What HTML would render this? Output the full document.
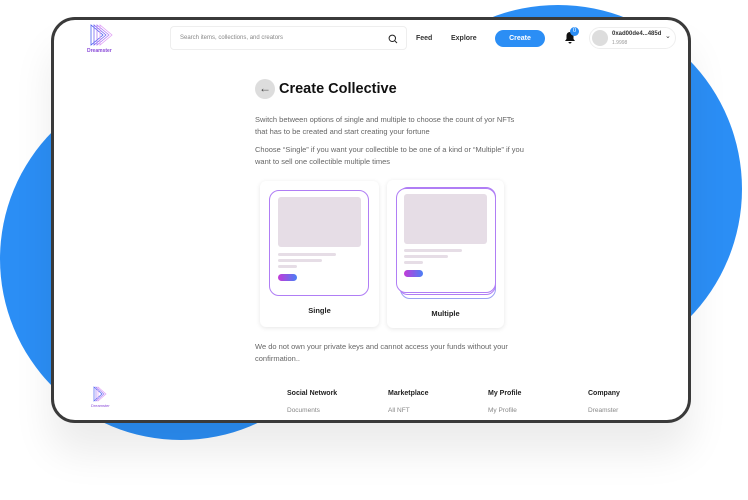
<!DOCTYPE html>
<html><head><style>
*{margin:0;padding:0;box-sizing:border-box}
body{width:748px;height:500px;background:#fff;position:relative;overflow:hidden;font-family:"Liberation Sans",sans-serif}
.c{position:absolute;border-radius:50%;background:#2b8ef5}
.frame{position:absolute;left:51px;top:17px;width:640px;height:406px;border:3px solid #3a3a3a;border-radius:24px;background:#fff;overflow:hidden;box-shadow:0 30px 40px rgba(0,0,0,.08)}
.a{position:absolute}
.search{left:116px;top:6px;width:237px;height:24px;border:1px solid #eee;border-radius:4px;font-size:6px;color:#888;padding:8px 9px}
.nav{font-size:7px;font-weight:bold;color:#333}
.btn{left:441px;top:10px;width:50px;height:17px;border-radius:9px;background:#2b8ef5;color:#fff;font-size:7px;font-weight:bold;text-align:center;line-height:17px}
.p{font-size:7.5px;color:#666;line-height:11.5px}
.card{background:#fff;border-radius:6px;box-shadow:0 1px 5px rgba(0,0,0,.1)}
.inner{border-radius:10px;border:1.5px solid #b07ef5;background:#fff}
.ph{background:#e6dde6;border-radius:3px}
.pill{border-radius:4px;height:7px;background:linear-gradient(90deg,#c33ad8,#4a7ff5)}
.ft{font-size:7px;font-weight:bold;color:#222}
.fl{font-size:6.5px;color:#888}
</style></head><body>
<div class="c" style="left:374px;top:5px;width:368px;height:368px"></div>
<div class="c" style="left:0;top:78px;width:362px;height:362px"></div>
<div class="frame">
 <div class="a" style="left:34px;top:3px;width:30px;height:30px">
  <svg width="30" height="30" viewBox="0 0 30 30"><g fill="none" stroke-width="0.8"><path d="M3 2 L3 22 L15 12 Z" stroke="#4a5ff0"/><path d="M6 2 L6 22 L18 12 Z" stroke="#7a66f0"/><path d="M9 2 L9 22 L21 12 Z" stroke="#b07ef5"/><path d="M12 2 L12 22 L24 12 Z" stroke="#e0a0f5"/></g></svg>
 </div>
 <div class="a" style="left:33px;top:28px;font-size:5px;color:#8a4ad8;font-weight:bold">Dreamster</div>
 <div class="a search">Search items, collections, and creators</div>
 <svg class="a" style="left:334px;top:14px" width="10" height="10" viewBox="0 0 10 10"><circle cx="4.3" cy="4.3" r="3.2" fill="none" stroke="#222" stroke-width="1"/><path d="M6.7 6.7L9 9" stroke="#222" stroke-width="1"/></svg>
 <div class="a nav" style="left:362px;top:15px">Feed</div>
 <div class="a nav" style="left:397px;top:15px">Explore</div>
 <div class="a btn">Create</div>
 <svg class="a" style="left:510px;top:11px" width="12" height="13" viewBox="0 0 12 13"><path d="M6 1C3.5 1 2.5 3 2.5 5V8L1 10H11L9.5 8V5C9.5 3 8.5 1 6 1Z M4.5 11A1.5 1.5 0 0 0 7.5 11Z" fill="#111"/></svg>
 <div class="a" style="left:516px;top:7px;width:9px;height:9px;border-radius:50%;background:#2b8ef5;color:#fff;font-size:6px;text-align:center;line-height:9px">0</div>
 <div class="a" style="left:535px;top:7px;width:87px;height:22px;border:1px solid #eee;border-radius:11px"></div>
 <div class="a" style="left:538px;top:10px;width:16px;height:16px;border-radius:50%;background:#ddd"></div>
 <div class="a" style="left:558px;top:11px;font-size:6px;font-weight:bold;color:#333">0xad00de4...485d</div>
 <div class="a" style="left:558px;top:20px;font-size:5px;color:#999">1.9998</div>
 <div class="a" style="left:611px;top:12px;font-size:7px;color:#333">⌄</div>
 <div class="a" style="left:201px;top:59px;width:20px;height:20px;border-radius:50%;background:#ddd;text-align:center;line-height:19px;font-size:12px;color:#444">←</div>
 <div class="a" style="left:225px;top:61px;font-size:14.5px;font-weight:bold;color:#111">Create Collective</div>
 <div class="a p" style="left:201px;top:94px;width:270px">Switch between options of single and multiple to choose the count of yor NFTs that has to be created and start creating your fortune</div>
 <div class="a p" style="left:201px;top:124px;width:270px">Choose “Single” if you want your collectible to be one of a kind or “Multiple” if you want to sell one collectible multiple times</div>
 <div class="a card" style="left:206px;top:161px;width:119px;height:146px">
  <div class="a inner" style="left:9px;top:9px;width:100px;height:106px">
   <div class="a ph" style="left:8px;top:6px;width:83px;height:50px"></div>
   <div class="a ph" style="left:8px;top:62px;width:58px;height:3px"></div>
   <div class="a ph" style="left:8px;top:68px;width:44px;height:3px"></div>
   <div class="a ph" style="left:8px;top:74px;width:19px;height:3px"></div>
   <div class="a pill" style="left:8px;top:83px;width:19px"></div>
  </div>
  <div class="a" style="left:0;width:100%;top:125px;text-align:center;font-size:7.5px;font-weight:bold;color:#222">Single</div>
 </div>
 <div class="a card" style="left:333px;top:160px;width:117px;height:148px">
  <div class="a inner" style="left:13px;top:9px;width:96px;height:110px;border-color:#9aa0f5"></div>
  <div class="a inner" style="left:11px;top:7px;width:98px;height:108px"></div>
  <div class="a inner" style="left:9px;top:8px;width:100px;height:105px">
   <div class="a ph" style="left:7px;top:5px;width:83px;height:50px"></div>
   <div class="a ph" style="left:7px;top:60px;width:58px;height:3px"></div>
   <div class="a ph" style="left:7px;top:66px;width:44px;height:3px"></div>
   <div class="a ph" style="left:7px;top:72px;width:19px;height:3px"></div>
   <div class="a pill" style="left:7px;top:81px;width:19px"></div>
  </div>
  <div class="a" style="left:0;width:100%;top:129px;text-align:center;font-size:7.5px;font-weight:bold;color:#222">Multiple</div>
 </div>
 <div class="a p" style="left:201px;top:321px;width:270px">We do not own your private keys and cannot access your funds without your confirmation..</div>
 <svg class="a" style="left:38px;top:366px" width="20" height="18" viewBox="0 0 20 18"><g fill="none" stroke-width="0.7"><path d="M2 1L2 15L10 8Z" stroke="#4a5ff0"/><path d="M4 1L4 15L12 8Z" stroke="#9a7ef5"/><path d="M6 1L6 15L14 8Z" stroke="#e0a0f5"/></g></svg>
 <div class="a" style="left:37px;top:383px;font-size:4px;color:#8a4ad8">Dreamster</div>
 <div class="a ft" style="left:233px;top:370px">Social Network</div>
 <div class="a ft" style="left:334px;top:370px">Marketplace</div>
 <div class="a ft" style="left:434px;top:370px">My Profile</div>
 <div class="a ft" style="left:534px;top:370px">Company</div>
 <div class="a fl" style="left:233px;top:387px">Documents</div>
 <div class="a fl" style="left:334px;top:387px">All NFT</div>
 <div class="a fl" style="left:434px;top:387px">My Profile</div>
 <div class="a fl" style="left:534px;top:387px">Dreamster</div>
</div>
</body></html>
